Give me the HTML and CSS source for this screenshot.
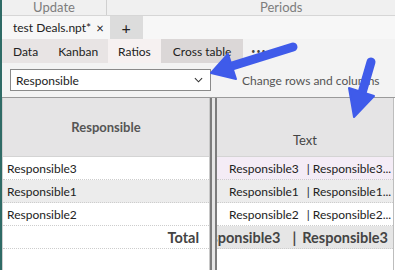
FILE: index.html
```html
<!DOCTYPE html>
<html lang="en">
<head>
  <meta charset="UTF-8">
  <title>Cross table</title>
  <link rel="stylesheet" href="styles.css">
</head>
<body>

<div class="app">
  <!-- Ribbon group labels -->
  <div class="ribbon">
    <div class="group group-update">Update</div>
    <div class="group group-periods">Periods</div>
  </div>

  <!-- Document tabs -->
  <div class="doc-tabs">
    <div class="doc-tab">test Deals.npt* <span class="close">×</span></div>
    <div class="doc-tab add">+</div>
  </div>

  <!-- View tabs -->
  <div class="view-tabs">
    <div class="view-tab">Data</div>
    <div class="view-tab">Kanban</div>
    <div class="view-tab active">Ratios</div>
    <div class="view-tab hover">Cross table</div>
    <div class="view-more">•••</div>
  </div>

  <!-- Toolbar -->
  <div class="toolbar">
    <div class="select">
      <span>Responsible</span>
      <svg viewBox="0 0 10 6"><path d="M1 1l4 4 4-4"/></svg>
    </div>
    <div class="hint">Change rows and columns</div>
  </div>

  <!-- Cross table -->
  <div class="grid">
    <div class="pane pane-left">
      <div class="head">Responsible</div>
      <div class="row">Responsible3</div>
      <div class="row alt">Responsible1</div>
      <div class="row">Responsible2</div>
      <div class="row total">Total</div>
    </div>
    <div class="splitter"></div>
    <div class="pane pane-right">
      <div class="head head-text">Text</div>
      <div class="row sel"><span>Responsible3</span><span class="sep">|</span><span>Responsible3...</span></div>
      <div class="row alt"><span>Responsible1</span><span class="sep">|</span><span>Responsible1...</span></div>
      <div class="row"><span>Responsible2</span><span class="sep">|</span><span>Responsible2...</span></div>
      <div class="row total"><span>Responsible3</span><span class="sep">|</span><span>Responsible3</span></div>
    </div>
  </div>

  <!-- Annotation arrows -->
  <svg class="arrows" viewBox="0 0 395 270">
    <line x1="293" y1="47" x2="232" y2="66"/>
    <polygon points="211,73 228,54 236,79"/>
    <line x1="371" y1="62" x2="362" y2="93"/>
    <polygon points="354,117 349,88 374,96"/>
  </svg>
</div>

</body>
</html>
```

FILE: styles.css
```css
/* Base */
body {
  margin: 0;
  font-family: Lato, "Noto Sans", sans-serif;
  font-size: 12px;
  color: #222;
}

.app {
  position: relative;
  width: 395px;
  height: 270px;
  overflow: hidden;
  box-sizing: border-box;
  border-left: 2px solid #2f6b66;
  background: #f3f3f3;
  display: flex;
  flex-direction: column;
}

/* Ribbon */
.ribbon {
  height: 15px;
  display: flex;
  background: #f0f0f0;
  border-bottom: 1px solid #d6d6d6;
  box-shadow: 0 1px 1px rgba(0, 0, 0, 0.08);
  color: #7d7d7d;
  font-size: 13px;
  line-height: 14px;
}

.group-update {
  width: 104px;
  text-align: center;
  border-right: 1px solid #d0d0d0;
}

.group-periods {
  padding-left: 153px;
}

/* Document tabs */
.doc-tabs {
  height: 23px;
  display: flex;
  background: #f7f7f7;
}

.doc-tab {
  display: flex;
  align-items: center;
  padding: 0 6px 0 11px;
}

.doc-tab .close {
  margin-left: 5px;
  font-size: 13px;
}

.doc-tab.add {
  width: 33px;
  padding: 0;
  justify-content: center;
  background: #dcdcdc;
  font-size: 16px;
}

/* View tabs */
.view-tabs {
  height: 24px;
  display: flex;
  background: #e8e4e4;
}

.view-tab {
  display: flex;
  align-items: center;
  padding: 0 10px;
}

.view-tab:first-child {
  padding-left: 11px;
}

.view-tab.active {
  background: #f6f1f1;
}

.view-tab.hover {
  background: #dbd7d7;
  padding: 0 12px;
}

.view-more {
  flex: 1;
  background: #f3f3f3;
  padding-left: 8px;
  display: flex;
  align-items: center;
  color: #444;
  font-size: 7px;
  letter-spacing: 1px;
}

/* Toolbar */
.toolbar {
  height: 34px;
  display: flex;
  align-items: center;
  background: #f3f3f3;
}

.select {
  width: 201px;
  height: 22px;
  margin-left: 8px;
  box-sizing: border-box;
  border: 1px solid #8a8a8a;
  background: #fff;
  display: flex;
  align-items: center;
  justify-content: space-between;
  padding: 0 7px 0 5px;
}

.select svg {
  width: 9px;
  height: 6px;
  fill: none;
  stroke: #333;
  stroke-width: 1.2;
}

.hint {
  margin-left: 31px;
  color: #555;
  white-space: nowrap;
}

/* Cross table */
.grid {
  flex: 1;
  display: flex;
  background: #fff;
  border-top: 1px solid #9a9a9a;
}

.pane-left {
  width: 206px;
  border-left: 1px solid #cfcfcf;
  border-right: 1px solid #c8c8c8;
}

.splitter {
  width: 3px;
  border-left: 2px solid #7c7c7c;
  border-right: 2px solid #7c7c7c;
  background: #e6e6e6;
}

.pane-right {
  width: 176px;
  border-right: 1px solid #bdbdbd;
}

.head {
  height: 59px;
  box-sizing: border-box;
  background: #e5e4e5;
  border-bottom: 1px solid #d4d4d4;
  display: flex;
  align-items: center;
  justify-content: center;
  font-size: 13px;
  font-weight: bold;
  color: #555;
}

.head-text {
  align-items: flex-end;
  padding-bottom: 8px;
  font-weight: normal;
  color: #444;
}

.row {
  height: 23px;
  box-sizing: border-box;
  border-bottom: 1px dotted #cdcdcd;
  display: flex;
  align-items: center;
  padding-left: 4px;
  white-space: nowrap;
  overflow: hidden;
}

.row.alt {
  background: #ececec;
}

.row.sel {
  background: #f4ecf6;
}

.row.total {
  font-size: 14.5px;
  font-weight: bold;
  color: #444;
}

.pane-left .row.total {
  justify-content: flex-end;
  padding-right: 10px;
}

.pane-right .row {
  padding-left: 12px;
}

.pane-right .sep {
  margin: 0 3px 0 8px;
}

.pane-right .row.total {
  justify-content: flex-end;
  padding-right: 5px;
  background: #e6e6e6;
}

.pane-right .row.total .sep {
  margin: 0 6px 0 12px;
}

/* Arrows drawn over the screenshot */
.arrows {
  position: absolute;
  top: 0;
  left: -2px;
  width: 395px;
  height: 270px;
  pointer-events: none;
}

.arrows line {
  stroke: #3f5bea;
  stroke-width: 9;
  stroke-linecap: round;
}

.arrows polygon {
  fill: #3f5bea;
  stroke: #3f5bea;
  stroke-width: 2;
  stroke-linejoin: round;
}
```
